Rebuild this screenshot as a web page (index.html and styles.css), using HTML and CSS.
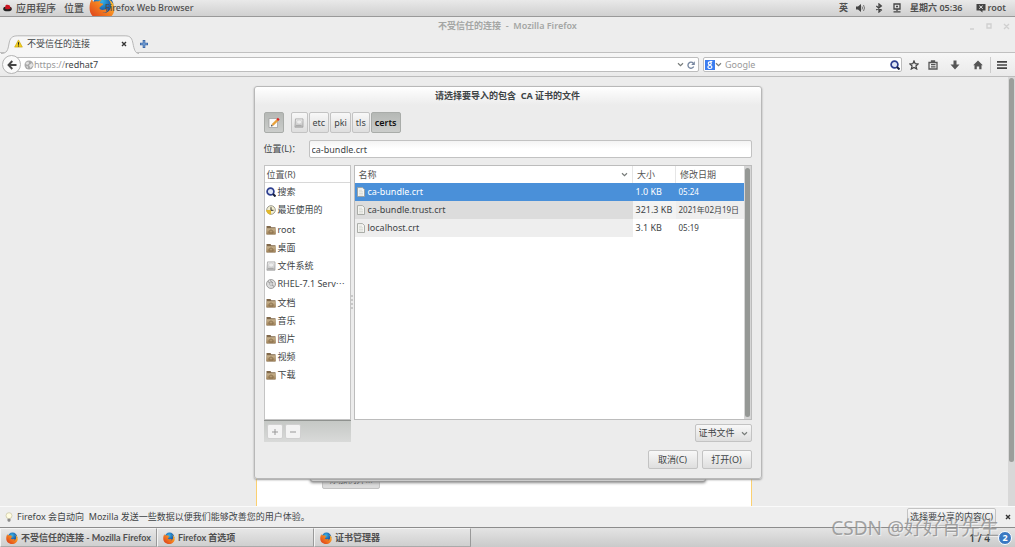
FILE: index.html
```html
<!DOCTYPE html>
<html lang="zh-CN">
<head>
<meta charset="utf-8">
<title>不受信任的连接 - Mozilla Firefox</title>
<link rel="stylesheet" href="styles.css">
</head>
<body>
<svg class="sprite" aria-hidden="true">
  <defs>
    <radialGradient id="globe" cx=".45" cy=".3" r=".7"><stop offset="0" stop-color="#35b5e8"/><stop offset=".6" stop-color="#1b62b0"/><stop offset="1" stop-color="#123a7c"/></radialGradient>
    <linearGradient id="fox" x1="1" y1="0" x2="0" y2="1"><stop offset="0" stop-color="#ffcf3a"/><stop offset=".45" stop-color="#f58220"/><stop offset="1" stop-color="#d8341c"/></linearGradient>
    <linearGradient id="fold" x1="0" y1="0" x2="0" y2="1"><stop offset="0" stop-color="#c9b48f"/><stop offset="1" stop-color="#a08258"/></linearGradient>
    <linearGradient id="metal" x1="0" y1="0" x2="0" y2="1"><stop offset="0" stop-color="#f4f4f4"/><stop offset="1" stop-color="#bcbcbc"/></linearGradient>
  </defs>
  <symbol id="firefox" viewBox="0 0 24 24">
    <circle cx="13" cy="10.500" r="9.500" fill="url(#globe)"/>
    <path fill="url(#fox)" d="M3 4c0 2 .3 2.500 1 3.200C5.500 6.500 7 6.400 8.500 7c1-.9 2-1.200 3-1.200-1 .9-1.500 1.700-1.400 2.600l2.900.6c.3 1-1.400 1.700-2.300 2.200.2 1-.4 1.300-1.300 1.500.8 2 3.200 2.400 5.200 1.600 1.500-.6 2.600-.3 2.700.6-1 1.600-3 2.600-5 2.500 4 .9 8-2 8-6.300 0-3-1.200-5-2.600-6.300 3 1.200 5.800 4.500 5.800 9C23.500 19.500 18.500 24 12 24 5.500 24 .5 19.500.5 13 .5 9 1.500 6 3 4z"/>
  </symbol>
  <symbol id="folder" viewBox="0 0 10 10">
    <path fill="#80684a" d="M.5 1h4l.8 1.200H9.500V9.500H.5z"/><path fill="url(#fold)" d="M.8 3.200H9.600V9.300H.4z"/>
    <path fill="none" stroke="#846b49" stroke-width=".8" d="M3 8V6.200L5 4.800l2 1.400V8z"/>
  </symbol>
  <symbol id="disk" viewBox="0 0 10 10">
    <path fill="url(#metal)" stroke="#999" stroke-width=".7" d="M1.500.9h7.500V9.200H.9z"/><path stroke="#999" stroke-width=".8" d="M2 7.700h5.500"/><ellipse cx="5.200" cy="4" rx="2.600" ry="2" fill="#ededed" stroke="#c4c4c4" stroke-width=".5"/>
  </symbol>
  <symbol id="file" viewBox="0 0 10 10">
    <path fill="#f5f5f2" stroke="#979b96" stroke-width=".8" d="M1.500.6h5l2 2v6.900h-7z"/><path fill="none" stroke="#c6c9c2" stroke-width=".6" d="M3 3.200h3M3 4.800h4M3 6.400h4M3 8h4"/>
  </symbol>
  <symbol id="lens" viewBox="0 0 10 10">
    <circle cx="4.500" cy="4.500" r="3.400" fill="#dfe6f5" stroke="#2e3f8f" stroke-width="1.700"/><path stroke="#161d38" stroke-width="2" d="M7 7l2.500 2.500"/>
  </symbol>
  <symbol id="chevron" viewBox="0 0 8 6"><path fill="none" stroke="#777b79" stroke-width="1.400" d="M1 1.500l3 3 3-3"/></symbol>
</svg>

<header class="panel">
  <svg class="hat" viewBox="0 0 10 8"><ellipse cx="5" cy="5" rx="4.800" ry="2.600" fill="#222"/><path fill="#cc1522" d="M2.200 4.500L3 .8c1.500-.8 3-.5 4.600.4l.9 3.300c-1.500 1.200-5 1.200-6.300 0z"/></svg>
  <button class="menu">应用程序</button>
  <button class="menu">位置</button>
  <button class="menu app"><svg class="app-logo"><use href="#firefox"/></svg><span class="app-name">Firefox Web Browser</span></button>
  <div class="status">
    <span>英</span>
    <svg class="i10" viewBox="0 0 10 10"><path fill="#444" d="M0 3.500h2L5 1v8L2 6.500H0z"/><path fill="none" stroke="#777" d="M6 3.500q1 1.500 0 3M7.500 2q2 3 0 6"/></svg>
    <svg class="i10" viewBox="0 0 10 10"><path fill="none" stroke="#444" stroke-width="1.300" d="M2.300 3l5 4L5 9V1l2.300 2-5 4"/></svg>
    <svg class="i10" viewBox="0 0 10 10"><path fill="none" stroke="#444" stroke-width="1.300" d="M2 1h6v5H2zM5 6v2M1.500 8.800h7M4 3.500h2"/></svg>
    <span class="clock">星期六 05:36</span>
    <span class="user"><svg class="i10" viewBox="0 0 10 10"><path fill="#444" d="M.5 1h9v6.500H6.500v2l-2.500-2H.5z"/><path stroke="#eee" d="M3.300 2.700l3.400 3M6.700 2.700l-3.400 3"/></svg>root</span>
  </div>
</header>

<div class="titlebar">
  <h1>不受信任的连接&nbsp; -&nbsp; Mozilla Firefox</h1>
  <svg class="winctl" viewBox="0 0 42 10"><path fill="none" stroke="#d0d0d0" stroke-width="1.400" d="M2 8h4M19 3h4v4h-4zM36 3l5 5M41 3l-5 5"/></svg>
</div>

<nav class="tabs">
  <div class="tab">
    <svg class="tab-shape" viewBox="0 0 139 19" preserveAspectRatio="none"><path fill="#f6f6f6" stroke="#b6b6b6" d="M0 18.500C6 18.500 7 15 8 9S11 .8 17 .8H125c6 0 7 3 8 8s2 9.700 6 9.700"/></svg>
    <svg class="warn" viewBox="0 0 10 10"><path fill="#f3cf1c" stroke="#c9a40c" stroke-width=".7" stroke-linejoin="round" d="M5 1l4.300 8H.7z"/><path stroke="#222" stroke-width="1.200" d="M5 3.500v3M5 7.200v1.100"/></svg>
    <span class="tab-label">不受信任的连接</span>
    <button class="plain" aria-label="关闭标签页"><svg class="i6" viewBox="0 0 6 6"><path stroke="#333" stroke-width="1.400" d="M1 1l4 4M5 1L1 5"/></svg></button>
  </div>
  <button class="plain" aria-label="新标签页"><svg class="i8" viewBox="0 0 8 8"><path stroke="#3d69a8" stroke-width="2.600" d="M4 0v8M0 4h8"/><path stroke="#7ba5d8" stroke-width="1" d="M4 1v6M1 4h6"/></svg></button>
</nav>

<div class="toolbar">
  <button class="back" aria-label="后退"><svg class="i10" viewBox="0 0 10 10"><path fill="none" stroke="#444" stroke-width="1.900" d="M5.300 1L1.500 5l3.800 4M1.800 5H9.500"/></svg></button>
  <div class="urlbar">
    <svg class="i10" viewBox="0 0 10 10"><circle cx="5" cy="5" r="4.500" fill="#aaa"/><path fill="#e4e4e4" d="M1.500 3l3-1.500.5 2-2 1.500zM5 5l3-2 1 2.500L6.500 8zM2 6l2 .5L4 8.500z"/></svg>
    <div class="url" role="textbox" aria-label="网址" contenteditable="true"><span class="scheme">https://</span>redhat7</div>
    <svg class="chev"><use href="#chevron"/></svg>
    <svg class="i8" viewBox="0 0 8 8"><path fill="none" stroke="#7787a0" stroke-width="1.300" d="M6.300 2.300A3 3 0 1 0 6.700 5.500"/><path fill="#7787a0" d="M7.800.3v3.700H4.200z"/></svg>
  </div>
  <div class="search">
    <svg class="i10" viewBox="0 0 10 10"><path fill="#3b7df0" d="M0 0h10v10H0z"/><g fill="none" stroke="#fff" stroke-width="1.200"><circle cx="4.800" cy="3.300" r="1.500"/><ellipse cx="4.900" cy="7" rx="2" ry="1.500"/><path d="M5 1.500h2.300"/></g></svg>
    <svg class="chev"><use href="#chevron"/></svg>
    <input type="text" placeholder="Google" aria-label="搜索">
    <svg class="i10"><use href="#lens"/></svg>
  </div>
  <div class="tools">
    <button class="plain" aria-label="书签"><svg class="i10" viewBox="0 0 10 10"><path fill="none" stroke="#444" stroke-width="1.200" d="M5 .9l1.200 2.800 3 .3-2.300 2 .8 3L5 7.400 2.300 9l.8-3L.8 4l3-.3z"/></svg></button>
    <button class="plain" aria-label="书签列表"><svg class="i10" viewBox="0 0 10 10"><path fill="none" stroke="#555" stroke-width="1.300" d="M1 2.500h8v6.500H1zM3.500 2.500V1h3v1.500M3 4.600h4.500M3 6.800h4.500"/></svg></button>
    <button class="plain" aria-label="下载"><svg class="i10" viewBox="0 0 10 10"><path fill="#555" d="M3.500.5h3V4.500h3L5 9.500.5 4.500h3z"/></svg></button>
    <button class="plain" aria-label="主页"><svg class="i10" viewBox="0 0 10 10"><path fill="#555" d="M5 .5l4.800 4.800H8.500v4h-2.300V6.500H3.800v2.800H1.500v-4H.2z"/></svg></button>
    <button class="plain burger" aria-label="菜单"><svg class="i10" viewBox="0 0 10 10"><path stroke="#444" stroke-width="1.700" d="M0 1.800h10M0 5h10M0 8.200h10"/></svg></button>
  </div>
</div>

<main class="viewport">
  <div class="page"><button class="btn exception">添加例外…</button></div>
  <div class="scroll"></div>
  <div class="manager"></div>

  <section class="dialog" role="dialog" aria-labelledby="dlg-title">
    <h2 id="dlg-title">请选择要导入的包含&nbsp; CA 证书的文件</h2>
    <div class="path">
      <button class="btn on edit" aria-label="输入文件名"><svg class="i12" viewBox="0 0 12 12"><path fill="#fafafa" stroke="#999" stroke-width=".7" d="M1 1.500h8.500v9H1z"/><path stroke="#e8a13a" stroke-width="2.400" d="M4.500 8l5-5"/><path stroke="#d22" stroke-width="2.400" d="M9.300 3.200l1.500-1.500"/><path fill="#333" d="M3 9.500l.4-2 1.600 1.600z"/></svg></button>
      <button class="btn" aria-label="文件系统根"><svg class="i10"><use href="#disk"/></svg></button>
      <button class="btn">etc</button>
      <button class="btn">pki</button>
      <button class="btn">tls</button>
      <button class="btn on">certs</button>
    </div>
    <div class="location">
      <label for="loc">位置(L)：</label>
      <input id="loc" type="text" value="ca-bundle.crt">
    </div>
    <div class="panes">
      <aside class="places">
        <div class="places-list">
          <h3>位置(R)</h3>
          <ul>
            <li><svg class="i10"><use href="#lens"/></svg>搜索</li>
            <li><svg class="i10" viewBox="0 0 10 10"><circle cx="5" cy="5" r="4.300" fill="#f4efd0" stroke="#9b9b90"/><path fill="#e2b92c" d="M0 5h5v4.500Q1 9.500 0 5z"/><path fill="none" stroke="#333" d="M5 2.200V5.300H7.500"/></svg>最近使用的</li>
          </ul>
          <ul>
            <li><svg class="i10"><use href="#folder"/></svg>root</li>
            <li><svg class="i10"><use href="#folder"/></svg>桌面</li>
            <li><svg class="i10"><use href="#disk"/></svg>文件系统</li>
            <li><svg class="i10" viewBox="0 0 10 10"><circle cx="5" cy="5" r="4.500" fill="#dcdcdc" stroke="#8f8f8f" stroke-width=".8"/><path stroke="#909090" d="M2 2.500l6 5M4 1.500l3 2.500"/><circle cx="5" cy="5" r="1.300" fill="#fff" stroke="#888" stroke-width=".6"/></svg>RHEL-7.1 Serv⋯</li>
          </ul>
          <ul>
            <li><svg class="i10"><use href="#folder"/></svg>文档</li>
            <li><svg class="i10"><use href="#folder"/></svg>音乐</li>
            <li><svg class="i10"><use href="#folder"/></svg>图片</li>
            <li><svg class="i10"><use href="#folder"/></svg>视频</li>
            <li><svg class="i10"><use href="#folder"/></svg>下载</li>
          </ul>
        </div>
        <div class="places-bar">
          <button class="mini" aria-label="添加"><svg class="i8" viewBox="0 0 8 8"><path stroke="#999" d="M4 1v6M1 4h6"/></svg></button>
          <button class="mini" aria-label="删除"><svg class="i8" viewBox="0 0 8 8"><path stroke="#999" d="M1 4h6"/></svg></button>
        </div>
      </aside>
      <div class="grip"></div>
      <div class="files-col">
        <div class="files">
          <div class="table-box">
            <table>
              <colgroup><col><col class="c-size"><col class="c-date"></colgroup>
              <thead><tr><th><span class="sorted">名称<svg class="chev"><use href="#chevron"/></svg></span></th><th>大小</th><th>修改日期</th></tr></thead>
              <tbody>
                <tr class="sel"><td><span class="name"><svg class="i10"><use href="#file"/></svg>ca-bundle.crt</span></td><td>1.0 KB</td><td class="date">05:24</td></tr>
                <tr class="alt"><td><span class="name"><svg class="i10"><use href="#file"/></svg>ca-bundle.trust.crt</span></td><td>321.3 KB</td><td class="date">2021年02月19日</td></tr>
                <tr><td><span class="name"><svg class="i10"><use href="#file"/></svg>localhost.crt</span></td><td>3.1 KB</td><td class="date">05:19</td></tr>
              </tbody>
            </table>
          </div>
          <div class="track"></div>
        </div>
        <div class="filter">
          <select class="btn" aria-label="文件类型"><option>证书文件</option></select>
          <svg class="chev"><use href="#chevron"/></svg>
        </div>
      </div>
    </div>
    <div class="actions">
      <button class="btn">取消(C)</button>
      <button class="btn">打开(O)</button>
    </div>
  </section>
</main>

<div class="notice">
  <svg class="i10" viewBox="0 0 10 10"><circle cx="5" cy="3.700" r="3" fill="#fffce0" stroke="#c8c4a4" stroke-width=".7"/><path fill="#8a8a8a" d="M3.500 6.700h3V9L5 10 3.500 9z"/></svg>
  <p>Firefox 会自动向&nbsp; Mozilla 发送一些数据以便我们能够改善您的用户体验。</p>
  <button class="btn share">选择要分享的内容(C)</button>
  <button class="plain" aria-label="关闭"><svg class="i6" viewBox="0 0 6 6"><path stroke="#333" stroke-width="1.400" d="M1 1l4 4M5 1L1 5"/></svg></button>
</div>

<footer class="taskbar">
  <button class="task"><svg class="i12"><use href="#firefox"/></svg>不受信任的连接 - Mozilla Firefox</button>
  <button class="task"><svg class="i12"><use href="#firefox"/></svg>Firefox 首选项</button>
  <button class="task"><svg class="i12"><use href="#firefox"/></svg>证书管理器</button>
  <div class="pager">1 / 4</div>
  <span class="badge">2</span>
</footer>
<div class="watermark">CSDN @好好肖先生</div>
</body>
</html>
```
FILE: styles.css
```css
* { box-sizing: border-box; }
html, body { height: 100%; }
body {
  margin: 0;
  display: flex;
  flex-direction: column;
  position: relative;
  overflow: hidden;
  background: #ededed;
  color: #3e4446;
  font: 9px/12px "Noto Sans", "Noto Sans CJK SC", sans-serif;
}
h1, h2, h3, p, ul { margin: 0; padding: 0; font-size: inherit; }
ul { list-style: none; }
button, input, select { font: inherit; color: inherit; margin: 0; }
svg { display: block; flex: none; }
.sprite { position: absolute; width: 0; height: 0; }
.i6 { width: 6px; height: 6px; }
.i8 { width: 8px; height: 8px; }
.i10 { width: 10px; height: 10px; }
.i12 { width: 12px; height: 12px; }
.chev { width: 7px; height: 5px; }
.plain { display: flex; align-items: center; border: 0; padding: 0; background: none; }

.panel {
  display: flex;
  align-items: center;
  height: 17px;
  padding: 0 9px 0 3px;
  flex: none;
  overflow: hidden;
  background: linear-gradient(#e9e9e9, #d0d0d0);
  border-bottom: 1px solid #999;
  color: #505050;
  font-weight: 600;
}
.hat { width: 9px; height: 8px; margin-right: 4px; }
.menu { display: flex; align-items: center; border: 0; padding: 0; margin-right: 8px; background: none; font-weight: 600; }
.menu:not(.app) { font-size: 10px; font-weight: 500; }
.menu.app { margin-left: -3px; font-weight: 500; }
.app-logo { width: 26px; height: 26px; margin-bottom: 3px; }
.app-name { margin-left: -10px; }
.status { margin-left: auto; display: flex; align-items: center; gap: 8px; }
.clock { font-size: 9px; }
.user { display: flex; align-items: center; gap: 2px; margin-left: 5px; }

.titlebar { display: flex; align-items: center; flex: none; height: 18px; padding-right: 5px; color: #a4a6a4; }
.titlebar h1 { flex: 1; text-align: center; padding-left: 47px; font-weight: 600; }
.winctl { width: 42px; height: 10px; }

.tabs { display: flex; align-items: center; gap: 1px; flex: none; height: 18px; padding-left: 1px; border-bottom: 1px solid #c0c0c0; }
.tab { position: relative; display: flex; align-items: center; width: 138px; height: 18px; padding: 0 12px 0 13px; }
.tab > * { position: relative; }
.tab > .tab-shape { position: absolute; left: 0; top: 0; width: 100%; height: 19px; }
.warn { width: 9px; height: 9px; margin-right: 4px; }
.tab-label { flex: 1; }

.toolbar { display: flex; align-items: center; flex: none; height: 24px; padding: 0 8px 0 2px; background: linear-gradient(#f6f6f6, #eaeaea); border-bottom: 1px solid #bcbcbc; }
.back { display: flex; align-items: center; justify-content: center; width: 19px; height: 19px; padding: 0; border: 1px solid #b4b4b4; border-radius: 50%; background: #fafafa; z-index: 1; }
.urlbar, .search { display: flex; align-items: center; height: 15px; border: 1px solid #bdbdbd; border-radius: 2px; background: #fff; }
.urlbar { flex: 1; margin-left: -5px; padding: 0 3px 0 7px; gap: 3px; }
.url { flex: 1; outline: 0; margin-left: -3px; }
.scheme { color: #9a9a9a; }
.search { width: 199px; margin-left: 4px; padding: 0 1px 0 1px; }
.search input { flex: 1; min-width: 0; border: 0; padding: 0 3px; background: none; outline: 0; }
.search input::placeholder { color: #999; opacity: 1; }
.tools { display: flex; align-items: center; gap: 9px; margin-left: 7px; }
.tools .plain:nth-child(3) { margin-left: 3px; }
.tools .plain:nth-child(4) { margin-left: 4px; }
.burger { border-left: 1px solid #ccc; padding-left: 6px; height: 16px; margin-left: -2px; }

.viewport { position: relative; flex: 1; min-height: 0; display: flex; justify-content: center; background: #ececec; overflow: hidden; }
.page { display: flex; align-items: flex-end; width: 496px; margin: 24px 7px 0 0; background: #fff; border: 1px solid #fbd070; border-width: 0 1px; padding: 0 65px 17px; }
.page .exception { width: 58px; height: 18px; padding: 0; background: #dcdcdc; }
.scroll { position: absolute; right: 0; top: 0; bottom: 0; width: 7px; padding: 1px; background: #d8d8d8; }
.scroll::before { content: ""; display: block; width: 5px; height: 90%; border-radius: 3px; background: #9b9e9b; }
.manager { position: absolute; left: 50%; margin-left: -198px; top: 40px; bottom: 24px; width: 396px; background: #ddd; border: 1px solid #999; border-radius: 3px; box-shadow: 0 1px 3px #888; }

.dialog {
  position: absolute;
  top: 9px;
  left: 50%;
  width: 508px;
  margin-left: -254px;
  padding: 0 9px 9px;
  display: flex;
  flex-direction: column;
  background: linear-gradient(#fff, #ececec 18px);
  border: 1px solid #b8b8b8;
  border-radius: 3px;
  box-shadow: 0 1px 2px #999;
}
.dialog h2 { text-align: center; line-height: 17px; font-weight: 700; }
.btn {
  display: flex;
  align-items: center;
  justify-content: center;
  height: 19px;
  padding: 0 4px;
  border: 1px solid #c3c3c3;
  border-radius: 2px;
  background: linear-gradient(#f8f8f8, #dedede);
}
.btn.on { background: linear-gradient(#b5b8b5, #cbcdcb); border-color: #a9aca9; font-weight: 600; color: #111; }
.path { display: flex; gap: 1px; margin-top: 8px; }
.path .btn { height: 21px; padding: 0 3px; }
.path .btn:nth-child(2) { width: 17px; }
.path .edit { width: 20px; margin-right: 6px; }
.location { display: flex; align-items: center; margin-top: 7px; }
.location label { width: 45px; }
.location input { flex: 1; min-width: 0; height: 18px; padding: 0 2px; border: 1px solid #c2c2c2; border-radius: 2px; background: linear-gradient(#f3f3f3, #fff 8px); outline: 0; }
.panes { display: flex; margin-top: 7px; }
.places { display: flex; flex-direction: column; width: 87px; }
.places-list { flex: 1; border: 1px solid #c4c4c4; background: #fff; }
.places h3 { height: 17px; padding-left: 2px; line-height: 17px; font-weight: 400; color: #555; border-bottom: 1px solid #d8d8d8; }
.places li { display: flex; align-items: center; gap: 2px; height: 18px; padding-left: 1px; white-space: nowrap; }
.places ul + ul { margin-top: 2px; }
.places ul + ul + ul { margin-top: 1px; }
.places-bar { display: flex; align-items: center; gap: 2px; height: 22px; padding-left: 3px; background: linear-gradient(#c5c8c5, #d9dad9); border-top: 1px solid #8f928f; }
.mini { display: flex; align-items: center; justify-content: center; width: 16px; height: 15px; padding: 0; border: 1px solid #d0d0d0; border-radius: 2px; background: #f3f3f3; }
.grip { width: 3px; height: 14px; margin-top: 130px; border-left: 2px dotted #c8c8c8; }
.files-col { flex: 1; display: flex; flex-direction: column; gap: 4px; }
.files { display: flex; height: 255px; border: 1px solid #bcbcbc; background: #fff; }
.table-box { flex: 1; min-width: 0; }
table { width: 100%; table-layout: fixed; border-collapse: collapse; }
.c-size { width: 43px; }
.c-date { width: 68px; }
th { height: 17px; padding: 0 4px; text-align: left; font-weight: 400; color: #555; border-left: 1px solid #e6e6e6; }
th:first-child { border: 0; }
.sorted { display: flex; align-items: center; justify-content: space-between; }
td { height: 18px; padding: 0 0 0 3px; white-space: nowrap; }
td.date { font-size: 8px; }
td:first-child { background: #eee; padding-left: 1px; }
.alt td { background: #eee; }
.alt td:first-child { background: #dcdcdc; }
.alt td:nth-child(2) { background: #f3f3f3; }
.sel td, .sel td:first-child, .sel td:nth-child(2) { background: #4a90d9; color: #fff; }
.name { display: flex; align-items: center; gap: 2px; }
.track { width: 7px; padding: 2px 1px; background: #d6d6d6; }
.track::before { content: ""; display: block; height: 100%; border-radius: 3px; background: #959895; }
.filter { position: relative; align-self: flex-end; }
.filter select { appearance: none; width: 57px; height: 18px; padding: 0 3px; }
.filter .chev { position: absolute; right: 4px; top: 7px; pointer-events: none; }
.actions { display: flex; justify-content: flex-end; gap: 4px; margin-top: 8px; }
.actions .btn { width: 50px; }

.notice { display: flex; align-items: center; flex: none; height: 21px; padding: 0 4px; gap: 3px; background: #eee; border-top: 1px solid #fafafa; white-space: nowrap; }
.notice p { flex: 1; }
.share { height: 18px; padding: 0 2px; margin-right: 6px; }
.taskbar { display: flex; flex: none; align-items: center; height: 20px; background: linear-gradient(#e4e4e4, #cacaca); border-top: 1px solid #8c8c8c; }
.task { display: flex; align-items: center; gap: 3px; flex: 0 1 157px; min-width: 0; height: 19px; padding: 0 5px; border: 1px solid #f4f4f4; border-right-color: #999; border-bottom-color: #aaa; background: linear-gradient(#e6e6e6, #cfcfcf); color: #505050; font-family: Lato, "Noto Sans CJK SC", sans-serif; font-weight: 700; white-space: nowrap; }
.pager { margin-left: auto; margin-right: 8px; font-size: 10px; font-weight: 600; }
.badge { width: 14px; height: 14px; margin-right: 3px; border: 1px solid #fff; border-radius: 50%; background: #3a78c2; color: #fff; text-align: center; font-weight: 700; }
.watermark { position: absolute; right: 16px; bottom: 5px; font-size: 19px; line-height: 28px; color: #8c8c8ccc; text-shadow: 1px 1px 0 #ffffff80; pointer-events: none; }
```
